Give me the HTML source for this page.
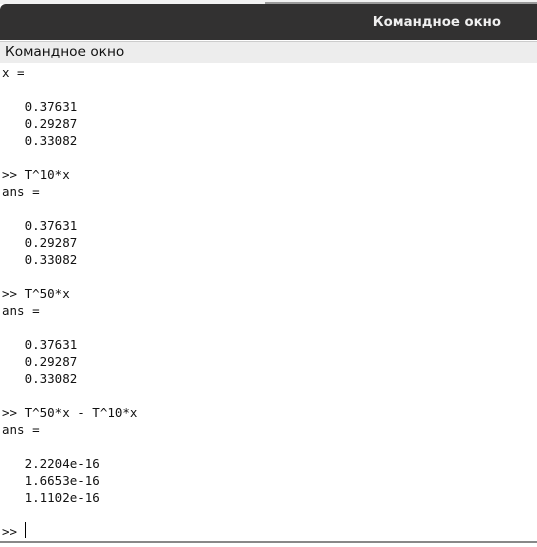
<!DOCTYPE html>
<html><head><meta charset="utf-8"><style>
html,body{margin:0;padding:0;background:#fff;width:537px;height:547px;overflow:hidden;position:relative}
.top{position:absolute;left:0;top:0;width:537px;height:4px;background:#f2f2f2}
.topline{position:absolute;left:265px;top:2px;width:272px;height:2px;background:#9a9a9a}
.title{position:absolute;left:0;top:4px;width:537px;height:36px;background:#323131;border-radius:6px 0 0 0;}
.title span{position:absolute;right:36px;top:11px;color:#f0f0f0;font:bold 13.3px "DejaVu Sans","Liberation Sans",sans-serif}
.head{position:absolute;left:0;top:41px;width:537px;height:21px;background:#ededed;border-top:1px solid #ccc}
.head span{position:absolute;left:5px;top:2px;font:13.7px "DejaVu Sans","Liberation Sans",sans-serif;color:#111}
pre{position:absolute;left:2px;top:64px;margin:0;font:12.5px "DejaVu Sans Mono","Liberation Mono",monospace;line-height:17px;color:#111}
.cur{position:absolute;left:25px;top:522px;width:1px;height:16px;background:#000}
.bot{position:absolute;left:0;top:541px;width:537px;height:2px;background:#888}
</style></head><body>
<div class="top"></div><div class="topline"></div>
<div class="title"><span>Командное окно</span></div>
<div class="head"><span>Командное окно</span></div>
<pre>x =

   0.37631
   0.29287
   0.33082

&gt;&gt; T^10*x
ans =

   0.37631
   0.29287
   0.33082

&gt;&gt; T^50*x
ans =

   0.37631
   0.29287
   0.33082

&gt;&gt; T^50*x - T^10*x
ans =

   2.2204e-16
   1.6653e-16
   1.1102e-16

&gt;&gt; </pre>
<div class="cur"></div>
<div class="bot"></div>
</body></html>
